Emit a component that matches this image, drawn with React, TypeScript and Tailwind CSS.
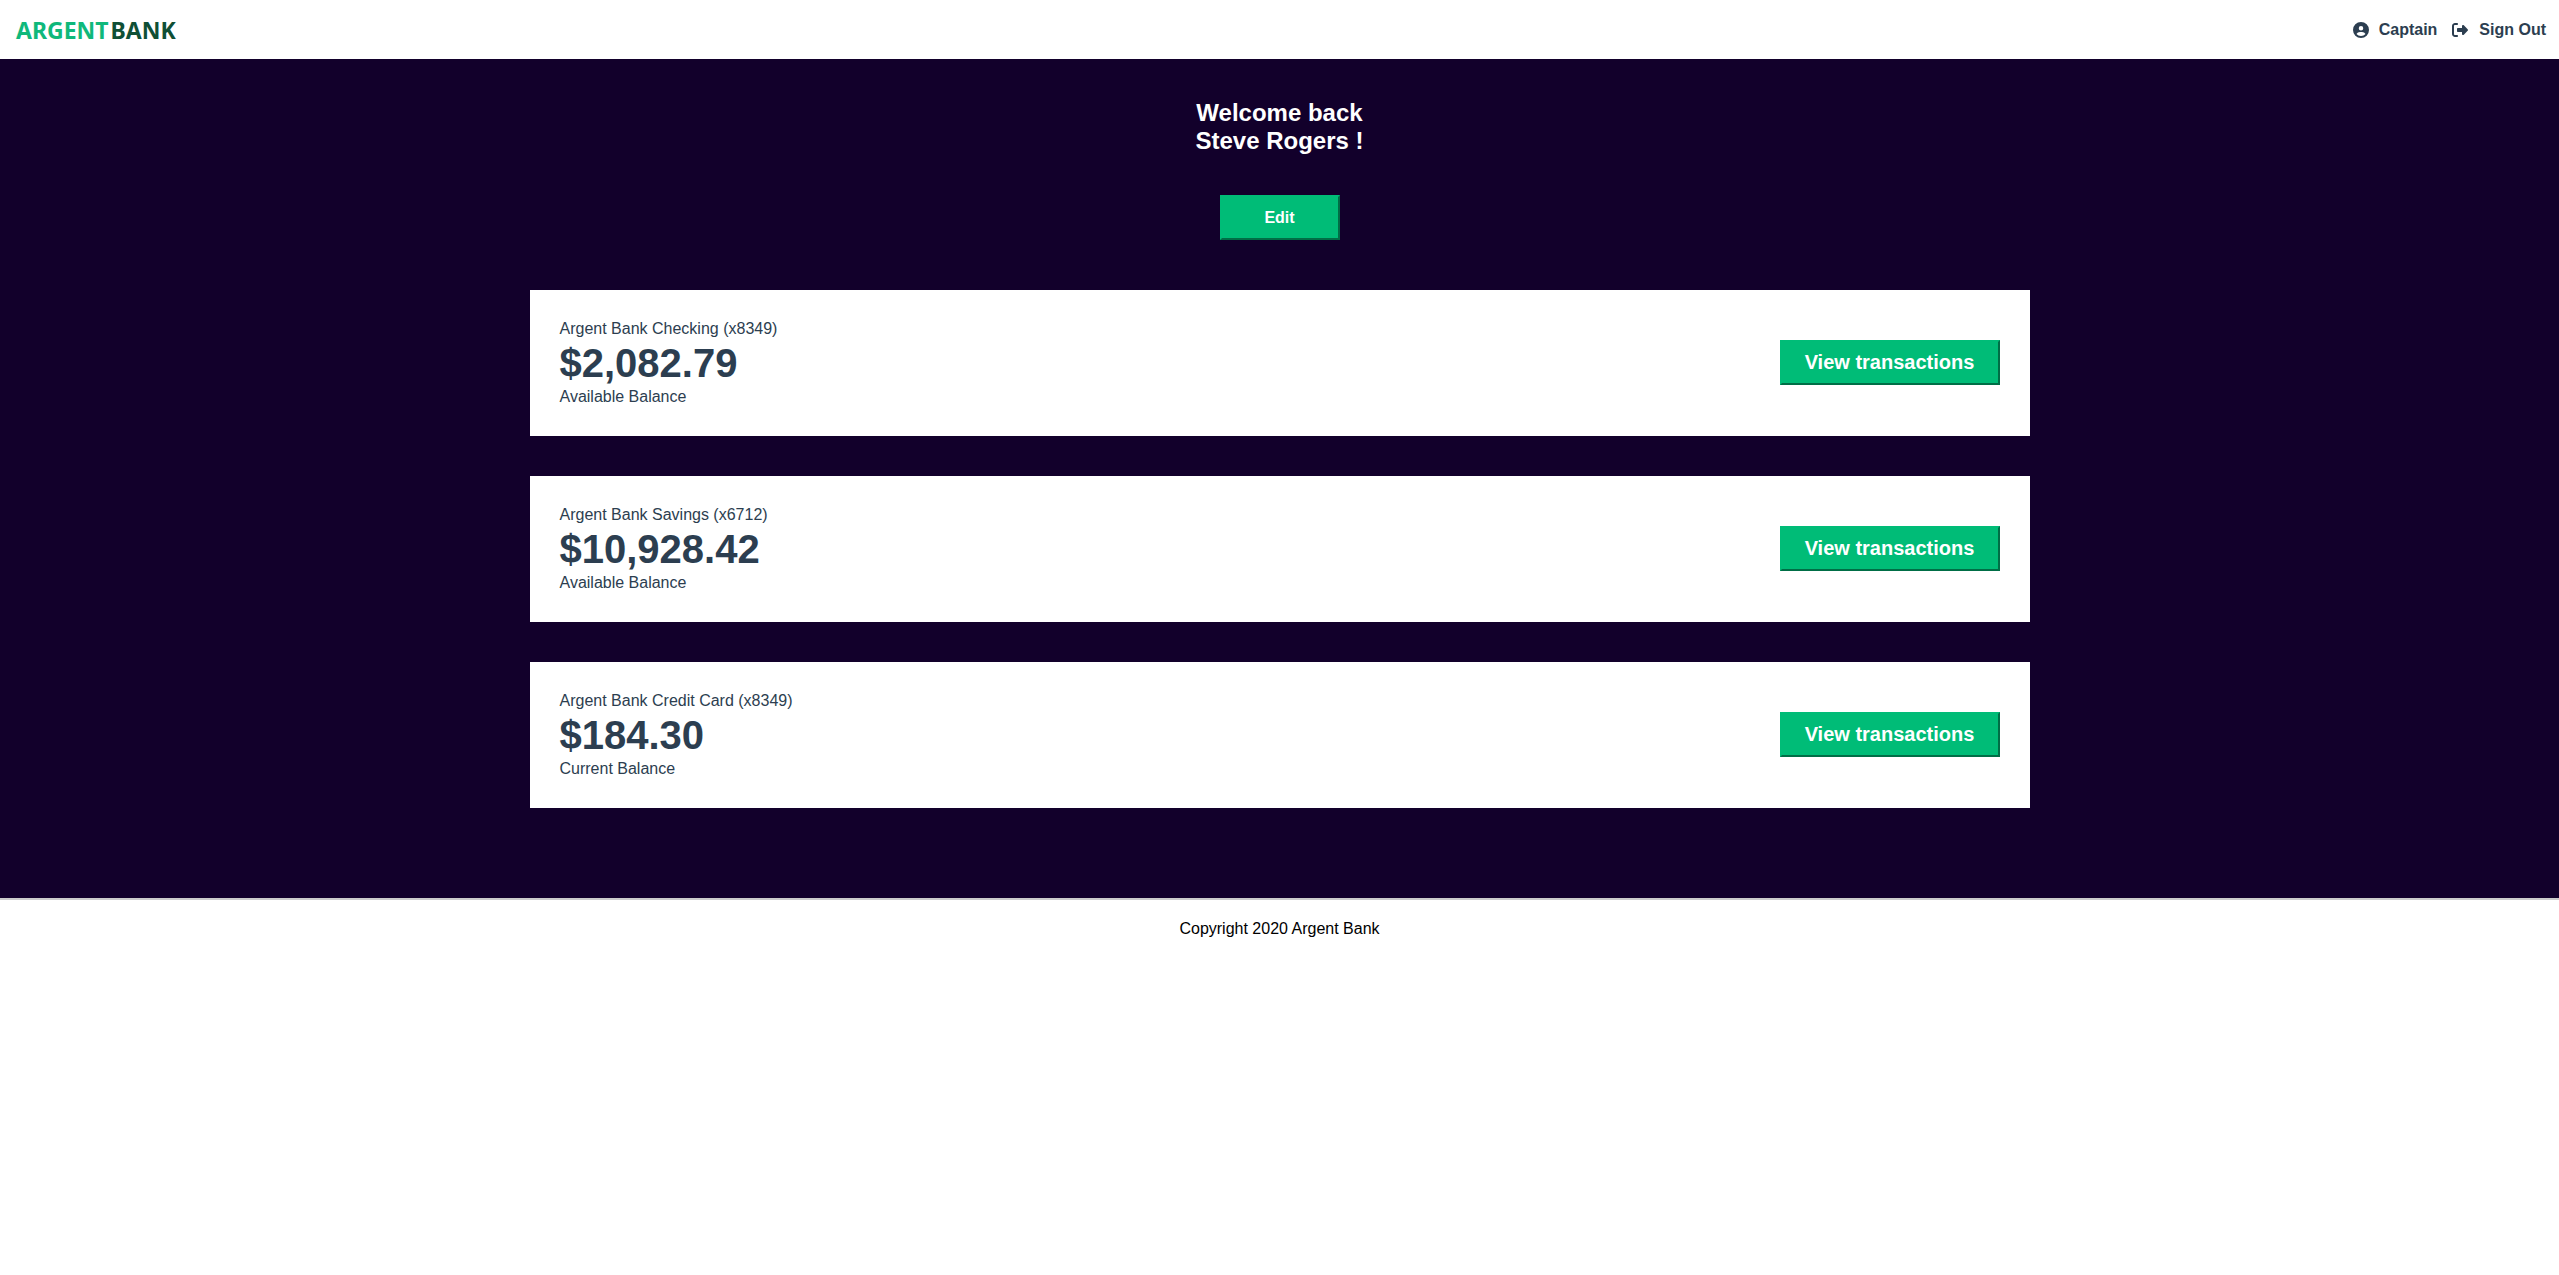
import { FaCircleUser, FaRightFromBracket } from "react-icons/fa6";

const accounts = [
  { title: "Argent Bank Checking (x8349)", amount: "$2,082.79", description: "Available Balance" },
  { title: "Argent Bank Savings (x6712)", amount: "$10,928.42", description: "Available Balance" },
  { title: "Argent Bank Credit Card (x8349)", amount: "$184.30", description: "Current Balance" },
];

function Header() {
  return (
    <nav className="flex h-[59px] items-center justify-between bg-white pl-4 pr-[13px]">
      <a href="#home" aria-label="Argent Bank" className="flex gap-0.5 font-['Noto_Sans',sans-serif] text-[23px] leading-8 font-bold">
        <span className="text-[#0fb87b]">ARGENT</span>
        <span className="text-[#0f4f35]">BANK</span>
      </a>
      <div className="flex items-center gap-[15px] font-bold text-[#2c3e50]">
        <a href="#profile" className="flex items-center gap-2.5">
          <FaCircleUser className="size-4" />
          Captain
        </a>
        <a href="#signout" className="flex items-center gap-[11px]">
          <FaRightFromBracket className="size-4" />
          Sign Out
        </a>
      </div>
    </nav>
  );
}

function Account({ title, amount, description }: (typeof accounts)[number]) {
  return (
    <section className="mx-auto mb-10 flex w-full max-w-[1500px] items-center justify-between bg-white px-[30px] py-[29px] text-[#2c3e50]">
      <div>
        <h3 className="leading-5">{title}</h3>
        <p className="text-[40px] leading-12 font-bold">{amount}</p>
        <p className="leading-5">{description}</p>
      </div>
      <button className="mb-0.5 h-[45px] w-[220px] border-2 border-t-[#00bc77] border-r-[#006e46] border-b-[#006e46] border-l-[#00bc77] bg-[#00bc77] text-xl font-bold text-white">
        View transactions
      </button>
    </section>
  );
}

export default function App() {
  return (
    <div className="bg-white font-['Liberation_Sans',Arial,sans-serif] text-base">
      <Header />
      <main className="bg-[#12002b] pt-10 pb-[50px]">
        <div className="mb-[50px] flex flex-col items-center text-white">
          <h1 className="mb-10 text-center text-2xl leading-7 font-bold">
            Welcome back
            <br />
            Steve Rogers !
          </h1>
          <button className="h-[45px] w-[120px] border-2 border-t-[#00bc77] border-r-[#006e46] border-b-[#006e46] border-l-[#00bc77] bg-[#00bc77] font-bold">
            Edit
          </button>
        </div>
        {accounts.map((account) => (
          <Account key={account.title} {...account} />
        ))}
      </main>
      <footer className="border-t-2 border-[#cccccc] py-5 text-center leading-[18px] text-black">
        <p>Copyright 2020 Argent Bank</p>
      </footer>
    </div>
  );
}
